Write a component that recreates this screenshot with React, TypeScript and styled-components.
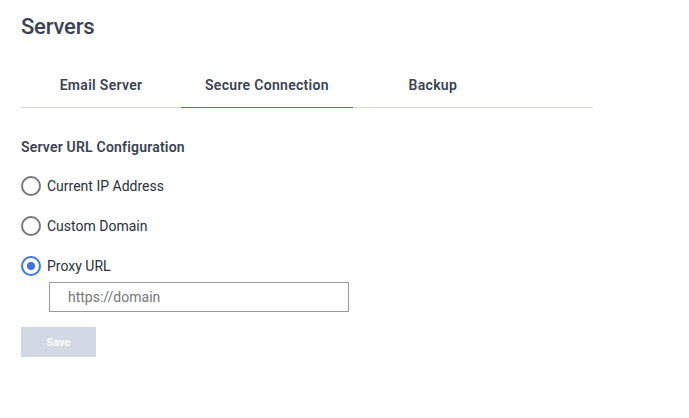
import React, { useState } from "react";
import styled, { createGlobalStyle } from "styled-components";

const Global = createGlobalStyle`
  html, body { margin: 0; padding: 0; background: #fff; }
  body { font-family: Roboto, "Liberation Sans", sans-serif; color: #3b4252; }
  * { box-sizing: border-box; }
`;

const Page = styled.div`
  padding: 14px 21px 0 21px;
  width: 689px;
  height: 418px;
  display: flex;
  flex-direction: column;
`;

const Title = styled.h1`
  margin: 0;
  font-size: 22px;
  font-weight: 500;
  line-height: 26px;
  color: #3a4253;
  letter-spacing: -0.2px;
`;

const Tabs = styled.div`
  margin-top: 31px;
  width: 572px;
  display: flex;
  border-bottom: 1px solid #d3d8e6;
`;

const Tab = styled.button<{ $active?: boolean }>`
  min-width: 160px;
  padding: 0 24px 9px 24px;
  height: 37px;
  border: none;
  background: none;
  font-family: Roboto, "Liberation Sans", sans-serif;
  font-size: 14px;
  font-weight: 600;
  letter-spacing: 0.3px;
  color: #3a4253;
  margin-bottom: -1px;
  border-bottom: 1px solid ${(p) => (p.$active ? "#3a74e6" : "transparent")};
  cursor: pointer;
`;

const Section = styled.div`
  margin-top: 30px;
  display: flex;
  flex-direction: column;
`;

const SectionTitle = styled.div`
  font-size: 14px;
  font-weight: 600;
  letter-spacing: 0.2px;
  color: #3a4253;
  line-height: 18px;
  margin-bottom: 10px;
`;

const RadioRow = styled.label`
  display: flex;
  align-items: center;
  gap: 6px;
  height: 40px;
  font-size: 14px;
  color: #2b2f38;
  cursor: pointer;
`;

const RadioCircle = styled.span<{ $checked?: boolean }>`
  width: 20px;
  height: 20px;
  border-radius: 50%;
  border: 2px solid ${(p) => (p.$checked ? "#3b74e8" : "#777")};
  display: flex;
  align-items: center;
  justify-content: center;
  &::after {
    content: "";
    width: 8px;
    height: 8px;
    border-radius: 50%;
    background: #3b74e8;
    display: ${(p) => (p.$checked ? "block" : "none")};
  }
`;

const UrlInput = styled.input`
  margin-left: 28px;
  margin-top: -4px;
  width: 300px;
  height: 30px;
  border: 1px solid #9a9a9a;
  padding: 0 18px;
  font-family: Roboto, "Liberation Sans", sans-serif;
  font-size: 14px;
  color: #333;
  outline: none;
  &::placeholder { color: #767676; }
`;

const SaveButton = styled.button`
  margin-top: 15px;
  width: 75px;
  height: 30px;
  border: none;
  background: #d3d9e4;
  color: #fff;
  font-family: Roboto, "Liberation Sans", sans-serif;
  font-size: 11px;
  font-weight: 700;
  cursor: default;
`;

const options = ["Current IP Address", "Custom Domain", "Proxy URL"];
const tabs = ["Email Server", "Secure Connection", "Backup"];

export default function App() {
  const [tab, setTab] = useState(1);
  const [sel, setSel] = useState(2);
  return (
    <Page>
      <Global />
      <Title>Servers</Title>
      <Tabs>
        {tabs.map((t, i) => (
          <Tab key={t} $active={tab === i} onClick={() => setTab(i)}>
            {t}
          </Tab>
        ))}
      </Tabs>
      <Section>
        <SectionTitle>Server URL Configuration</SectionTitle>
        {options.map((o, i) => (
          <RadioRow key={o} onClick={() => setSel(i)}>
            <RadioCircle $checked={sel === i} />
            {o}
          </RadioRow>
        ))}
        <UrlInput placeholder="https://domain" />
        <div>
          <SaveButton>Save</SaveButton>
        </div>
      </Section>
    </Page>
  );
}
